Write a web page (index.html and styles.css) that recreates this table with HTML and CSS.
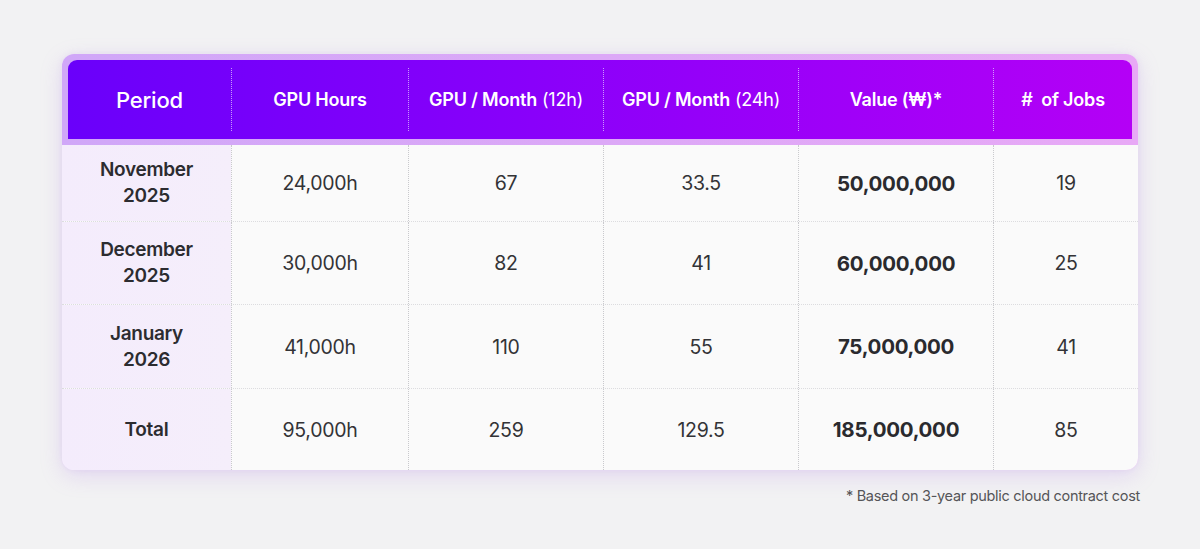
FILE: index.html
```html
<!DOCTYPE html>
<html lang="en">
<head>
<meta charset="utf-8">
<title>GPU Usage</title>
<link rel="stylesheet" href="styles.css">
</head>
<body>
<main class="page">
  <section class="card">
    <div class="head">
      <div class="hcell period">Period</div>
      <div class="hcell">GPU Hours</div>
      <div class="hcell">GPU / Month <span class="light">(12h)</span></div>
      <div class="hcell">GPU / Month <span class="light">(24h)</span></div>
      <div class="hcell">Value (₩)*</div>
      <div class="hcell">#&nbsp; of Jobs</div>
    </div>
    <div class="rows">
      <div class="row r1">
        <div class="cell label">November<br>2025</div>
        <div class="cell">24,000h</div>
        <div class="cell">67</div>
        <div class="cell">33.5</div>
        <div class="cell strong">50,000,000</div>
        <div class="cell">19</div>
      </div>
      <div class="row r2">
        <div class="cell label">December<br>2025</div>
        <div class="cell">30,000h</div>
        <div class="cell">82</div>
        <div class="cell">41</div>
        <div class="cell strong">60,000,000</div>
        <div class="cell">25</div>
      </div>
      <div class="row r3">
        <div class="cell label">January<br>2026</div>
        <div class="cell">41,000h</div>
        <div class="cell">110</div>
        <div class="cell">55</div>
        <div class="cell strong">75,000,000</div>
        <div class="cell">41</div>
      </div>
      <div class="row r4">
        <div class="cell label">Total</div>
        <div class="cell">95,000h</div>
        <div class="cell">259</div>
        <div class="cell">129.5</div>
        <div class="cell strong">185,000,000</div>
        <div class="cell">85</div>
      </div>
    </div>
  </section>
  <p class="note">* Based on 3-year public cloud contract cost</p>
</main>
</body>
</html>
```

FILE: styles.css
```css
html, body {
  margin: 0;
  padding: 0;
  background: #f2f2f3;
}

body {
  font-family: Inter, "Noto Sans", "Liberation Sans", sans-serif;
  color: #2f2f33;
}

.page {
  width: 1076px;
  padding: 54px 0 0 62px;
}

.card {
  width: 1076px;
  border-radius: 12px;
  padding-top: 6px;
  background: linear-gradient(90deg, #d0a7f8 0%, #dca8f7 50%, #e8a9f6 100%);
  overflow: hidden;
  box-shadow: 0 6px 22px rgba(175, 120, 230, 0.22), 0 0 6px rgba(175, 120, 230, 0.12);
}

.head {
  margin: 0 6px 6px;
  padding: 8px 0;
  display: grid;
  grid-template-columns: 163px 177px 195px 195px 195px 139px;
  border-radius: 9px 9px 0 0;
  background: linear-gradient(90deg, #6a00fa 0%, #8a00fa 45%, #b400f6 100%);
  color: #fff;
}

.hcell {
  height: 63px;
  display: flex;
  align-items: center;
  justify-content: center;
  font-size: 18px;
  font-weight: 600;
  letter-spacing: -0.2px;
  border-left: 1px dotted rgba(225, 200, 255, 0.75);
}

.hcell:first-child {
  border-left: none;
}

.hcell.period {
  font-size: 22px;
  font-weight: 500;
}

.light {
  font-weight: 400;
  margin-left: 5px;
}

.rows {
  background: #fafafa;
}

.row {
  box-sizing: border-box;
  display: grid;
  grid-template-columns: 169px 177px 195px 195px 195px 145px;
  border-top: 1px dotted #dcdcdf;
}

.row.r1 { height: 76px; border-top: none; }
.row.r2 { height: 83px; }
.row.r3 { height: 84px; }
.row.r4 { height: 82px; }

.cell {
  display: flex;
  align-items: center;
  justify-content: center;
  text-align: center;
  font-size: 19.5px;
  font-weight: 400;
  letter-spacing: -0.3px;
  color: #333336;
  border-left: 1px dotted #c9c9cd;
}

.cell.label {
  border-left: none;
  font-size: 19px;
  font-weight: 600;
  line-height: 26px;
  color: #2c2c30;
  background: linear-gradient(90deg, #f4ecfc 0%, #f5eefb 100%);
}

.cell.strong {
  font-size: 20.5px;
  font-weight: 700;
  color: #2a2a2e;
}

.note {
  margin: 17px -2px 0 0;
  text-align: right;
  font-size: 14.5px;
  color: #555558;
  letter-spacing: -0.3px;
}
```
